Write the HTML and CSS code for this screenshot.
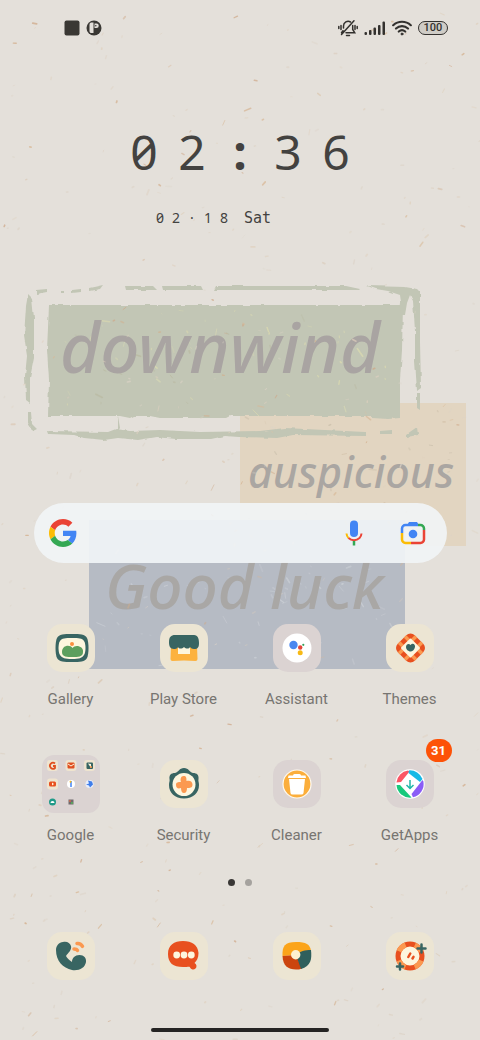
FILE: index.html
```html
<!DOCTYPE html>
<html lang="en">
<head>
    <meta charset="UTF-8">
    <meta name="viewport" content="width=device-width, initial-scale=1.0">
    <title>Home screen</title>
    <link rel="stylesheet" href="styles.css">
</head>
<body>
    <div class="screen">
        <!-- Wallpaper -->
        <svg class="wallpaper" viewBox="0 0 480 1040" preserveAspectRatio="xMidYMin slice">
            <defs>
                <filter id="rough" x="-5%" y="-5%" width="110%" height="110%">
                    <feTurbulence type="fractalNoise" baseFrequency="0.1" numOctaves="2" seed="4" result="n"/>
                    <feDisplacementMap in="SourceGraphic" in2="n" scale="3" xChannelSelector="R" yChannelSelector="G"/>
                </filter>
            </defs>
            <rect x="240" y="403" width="226" height="143" fill="#e2d5c1"/>
            <rect x="89" y="520" width="316" height="149" fill="#b6bbc4"/>
            <g filter="url(#rough)" fill="#c2c6b5">
                <path d="M49 305H403L402 350 400 380 400 418 388 419 372 418V416H230L226 418H160L150 416H134L130 418 120 416H48L49 380 47 350z"/>
                <path d="M28 294l4 4 2 20v40l-4 20v25l-4-3-1-24 2-20-3-20 2-30zM28 412h3l1 12 5 5-4 2-5-8z"/>
                <path d="M36 290l11-1v3l-11 2zM61 291h3v2h-3zM72 290l9-1v3l-9 1zM89 288l14-3-3 4-11 2z"/>
                <path d="M125 286h28l4 4h-31zM162 286h39l2 4h-40zM216 286h130l14 3-1 1-145 0z"/>
                <path d="M367 286l38 1 12 2 3 3v50l1 46-4 3-2-30v-30l-2-30-3-6-3 8-2 12-5 0 1-13-1-7-12-4-12-2z"/>
                <path d="M417 393h3v17l-3-2zM118 416l2 12-2 3zM380 431l12-1v4h-12zM407 434l10-7 1 8-11 2z"/>
                <path d="M48 431l60 1 8-3 14 2 30-1 40 2 60-1 25-3 80 4v4l-72-1-16 3-38-1-14-1-14 3h-35l-20-2-18 3-20-2-14 2-20-2-10-3-25-1z"/>
            </g>
            <g id="scratches" fill="none" stroke-linecap="round"></g>
            <g class="wallpaper-text">
                <text x="60" y="373" font-size="69" fill="#a9a4a2">downwind</text>
                <text x="248" y="488" font-size="43" fill="#aaa6a2">auspicious</text>
                <text x="105" y="609" font-size="62" fill="#a9a7a5">Good luck</text>
            </g>
            <g id="specks" fill="none" stroke-linecap="round"></g>
        </svg>

        <header class="status-bar">
            <div class="status-left">
                <svg width="16" height="16" viewBox="0 0 16 16"><rect width="15" height="15" x=".5" y=".5" rx="2" fill="#3a3834"/></svg>
                <svg width="16" height="16" viewBox="0 0 16 16"><circle cx="8" cy="8" r="7.500" fill="#3a3834"/><path d="M5 2.500h2.500v10.500H6a2 2 0 0 1-2.500-2V4.500a2 2 0 0 1 1.500-2zM8.500 3.500h2a2.200 2.200 0 0 1 0 4.500h-2z" fill="#e4e0da"/><circle cx="9.800" cy="5.700" r=".8" fill="#3a3834"/></svg>
            </div>
            <div class="status-right">
                <svg width="20" height="18" viewBox="0 0 20 18" fill="none" stroke="#33312e" stroke-width="1.500" stroke-linecap="round"><path d="M5.500 9V7a4.600 4.600 0 0 1 7-4M14.700 6.500v4l2 3.200H8M3.500 13.700l1.500-2M8.500 16.500h3M3.500 15.500L16 1.800M3 6.500v4M.8 7.500v2M17 6.500v4M19.200 7.500v2"/></svg>
                <svg width="22" height="16" viewBox="0 0 22 16" fill="#33312e"><rect x=".5" y="12" width="2.500" height="3" rx="1"/><rect x="5" y="10" width="2.500" height="5" rx="1"/><rect x="9.500" y="7.500" width="2.500" height="7.500" rx="1"/><rect x="14" y="5" width="2.500" height="10" rx="1"/><rect x="18.500" y="1.500" width="2.500" height="13.500" rx="1"/></svg>
                <svg width="20" height="16" viewBox="0 0 20 16" fill="none" stroke="#33312e" stroke-width="2.200" stroke-linecap="round"><path d="M1.200 5.200a13 13 0 0 1 17.600 0M4 8.500a9 9 0 0 1 12 0M6.800 11.500a5 5 0 0 1 6.400 0"/><circle cx="10" cy="14" r="1" fill="#33312e" stroke-width="1"/></svg>
                <span class="battery">100</span>
            </div>
        </header>

        <section class="clock">
            <div class="time"><span>0</span><span>2</span><span class="colon">:</span><span>3</span><span>6</span></div>
            <div class="date">
                <div class="day"><span>0</span><span>2</span><span>·</span><span>1</span><span>8</span></div>
                <span class="weekday">Sat</span>
            </div>
        </section>

        <form class="search">
            <svg width="28" height="28" viewBox="0 0 48 48"><path fill="#ea4335" d="M24 9.500c3.540 0 6.710 1.220 9.210 3.600l6.850-6.850C35.900 2.380 30.470 0 24 0 14.620 0 6.510 5.380 2.560 13.220l7.980 6.190C12.430 13.720 17.740 9.500 24 9.500z"/><path fill="#4285f4" d="M46.980 24.550c0-1.570-.15-3.090-.38-4.550H24v9.020h12.940c-.58 2.960-2.260 5.480-4.780 7.180l7.730 6c4.510-4.180 7.090-10.360 7.090-17.650z"/><path fill="#fbbc05" d="M10.530 28.590c-.48-1.450-.76-2.990-.76-4.590s.27-3.140.76-4.590l-7.980-6.190C.92 16.460 0 20.120 0 24c0 3.880.92 7.540 2.560 10.780z"/><path fill="#34a853" d="M24 48c6.480 0 11.930-2.130 15.890-5.810l-7.730-6c-2.150 1.450-4.920 2.300-8.160 2.300-6.260 0-11.570-4.220-13.470-9.910l-7.980 6.190C6.510 42.620 14.620 48 24 48z"/></svg>
            <input type="search" aria-label="Search">
            <button type="button" aria-label="Voice search">
                <svg width="28" height="28" viewBox="0 0 28 28" fill="none" stroke-width="2"><rect x="10" y="1.500" width="8" height="16.500" rx="4" fill="#4285f4"/><path stroke="#fbbc05" d="M6.500 14.500a7 7 0 0 0 2 4.500"/><path stroke="#ea4335" d="M8.500 19a8 8 0 0 0 11 0 7 7 0 0 0 2-4.500"/><path stroke="#34a853" stroke-width="2.500" d="M14 22v4.500"/></svg>
            </button>
            <button type="button" aria-label="Search by image">
                <svg width="28" height="28" viewBox="0 0 28 28" fill="none" stroke-width="2.500"><path fill="#4285f4" d="M8.500 5.500L10 3h8l1.500 2.500z"/><path stroke="#4285f4" d="M3 14V9.500A3.500 3.500 0 0 1 6.500 6H19"/><path stroke="#34a853" d="M19 6h2.500A3.500 3.500 0 0 1 25 9.500V11"/><path stroke="#ea4335" d="M25 11v9.500a3.500 3.500 0 0 1-3.500 3.500H12"/><path stroke="#fbbc05" d="M12 24H6.500A3.500 3.500 0 0 1 3 20.500V14"/><circle cx="14" cy="15" r="4.300" fill="#4285f4"/></svg>
            </button>
        </form>

        <main class="apps">
            <button class="app">
                <span class="slot"><span class="tile">
                    <svg viewBox="0 0 48 48"><path d="M25 10c8 0 13 0 15 4s2 16 0 20-7 4-15 4-13 0-15-4-2-16 0-20 7-4 15-4z" fill="#386562"/><path d="M25 14c7 0 10 0 12 3s2 11 0 14-5 4-12 4-10-1-12-4-2-11 0-14 5-3 12-3z" fill="#fdf6de"/><path d="M15 28c0-7 8-8 10.500-4C28 20 37 22 36 28c0 5-5 5-10.500 5S15 33 15 28z" fill="#5c9f5e"/><circle cx="25" cy="20" r="2" fill="#f98f3f"/></svg>
                </span></span>
                <span class="label">Gallery</span>
            </button>
            <button class="app">
                <span class="slot"><span class="tile">
                    <svg viewBox="0 0 48 48"><path d="M11 22h26l.5 13q0 2-2 2-11.500-1-23 0-2 0-2-2z" fill="#fcb23f"/><path d="M18 20h12v10H18z" fill="#fdf6de"/><path d="M15 11h19c4 0 5 4 5 8s-1 6-5 6c-2 0-3-1-4-2-1 2-4 2-6 0-2 2-5 2-6 0-1 2-3 2-4 2-4 0-5-3-5-7 0-5 2-7 6-7z" fill="#386562"/></svg>
                </span></span>
                <span class="label">Play Store</span>
            </button>
            <button class="app">
                <span class="slot"><span class="tile tile-mauve">
                    <svg viewBox="0 0 48 48"><circle cx="24" cy="24" r="14.500" fill="#fff"/><circle cx="20.500" cy="21" r="4.200" fill="#4a87f0"/><circle cx="27.200" cy="23.500" r="2.200" fill="#e3453a"/><circle cx="30.300" cy="20.800" r="1.100" fill="#34a35a"/><circle cx="27.200" cy="28.700" r="2.500" fill="#f7b914"/></svg>
                </span></span>
                <span class="label">Assistant</span>
            </button>
            <button class="app">
                <span class="slot"><span class="tile">
                    <svg viewBox="0 0 48 48"><g transform="rotate(45 24.500 24)" fill="none" stroke-width="5"><rect x="12.500" y="12" width="24" height="24" rx="6" fill="#e8501f"/><path d="M18.500 14.500h3.500M27 14.500h3.500M34 18v3.500M34 26.500v3.500M30.500 33.500H27M22 33.500H18.500M15 30V26.500M15 21.500V18" stroke="#fb9950"/><rect x="17.500" y="17" width="14" height="14" rx="1" fill="#fdf6de"/></g><path d="M24.500 21c2-2.500 5-1 4.500 2s-3 4.500-4.500 4.500S20 26 20 23s3-4 4.500-2z" fill="#386562"/></svg>
                </span></span>
                <span class="label">Themes</span>
            </button>
            <button class="app">
                <span class="slot"><span class="folder">
                    <svg viewBox="0 0 58 58">
                        <g fill="#efe4cf"><rect x="5" y="5" width="11" height="11" rx="3"/><rect x="23.500" y="5" width="11" height="11" rx="3"/><rect x="42" y="5" width="11" height="11" rx="3"/><rect x="5" y="23.500" width="11" height="11" rx="3"/></g>
                        <path d="M13 8.500a3 3 0 1 0 0 4.500v-2h-2" fill="none" stroke="#e0501f" stroke-width="1.800"/>
                        <rect x="25.500" y="7.500" width="7" height="6" rx="1" fill="#e0501f"/><path d="M26 9l3 2 3-2" fill="none" stroke="#fdf6de" stroke-width="1"/>
                        <rect x="44.500" y="7.500" width="6.500" height="6.500" rx="1" fill="#386562"/><path d="M46 8.500l3 4.500V9z" fill="#fdf6de"/><circle cx="49" cy="12" r="1" fill="#fb9950"/>
                        <rect x="7" y="26.500" width="7" height="5" rx="1.500" fill="#e8501f"/><path d="M10 27.500l2 1.500-2 1.500z" fill="#fdf6de"/>
                        <circle cx="29" cy="29" r="4" fill="#fff"/><path d="M29 26v6" stroke="#4285f4" stroke-width="1.500"/><path d="M28 27.500l1-1.500" stroke="#f7b914" stroke-width="1.500"/>
                        <circle cx="47.500" cy="29" r="4" fill="#e8eefb"/><path d="M46 25.500l4 1 1 3-3 3-1-2-3-1 3-1z" fill="#3f7dea"/>
                        <circle cx="10.500" cy="47" r="3.500" fill="#1e9a88"/><path d="M8.500 48a2 2 0 0 1 4 0z" fill="#fff"/>
                        <rect x="26.500" y="44.500" width="5" height="5" fill="#706a6c"/><path d="M27 45h2v2h-2z" fill="#b86a54"/><path d="M29 47h2v2h-2z" fill="#5da05e"/>
                    </svg>
                </span></span>
                <span class="label">Google</span>
            </button>
            <button class="app">
                <span class="slot"><span class="tile">
                    <svg viewBox="0 0 48 48"><path d="M24 8c5 0 5 4 9 5 4 0 6 2 5.500 6-.5 2 .5 3 .5 6 0 8-6 13.500-15 13.500S9 33 9 25c0-3 1-4 .5-6-.5-4 1.500-6 5.500-6 4-1 4-5 9-5z" fill="#386562"/><circle cx="24" cy="24.500" r="11.500" fill="#fdf6de"/><path d="M23.500 16c3 0 3 2 3 5 3-1 6 0 6 3.500S30 28 27 28c0 3-1 5-3 5s-3-2-3-5c-3 1-5 0-5-3s2-3 5-3c-1-3 0-6 2.500-6z" fill="#fb9950"/></svg>
                </span></span>
                <span class="label">Security</span>
            </button>
            <button class="app">
                <span class="slot"><span class="tile tile-mauve">
                    <svg viewBox="0 0 48 48"><circle cx="24" cy="24" r="14" fill="#fbae3c" stroke="#fffaf0" stroke-width="1.200"/><path d="M20 15.500q0-1.500 1.500-1.500h5q1.500 0 1.500 1.500h4.500l.5 2.500H15l.5-2.500zM16 19h16l-1.500 14q-.2 1.500-2 1.500h-9q-1.800 0-2-1.500z" fill="#fff"/></svg>
                </span></span>
                <span class="label">Cleaner</span>
            </button>
            <button class="app">
                <span class="slot"><span class="tile tile-mauve">
                    <svg viewBox="0 0 48 48"><circle cx="24" cy="24" r="14.700" fill="#fff"/><path d="M22 10.500A13.600 13.600 0 0 0 10.400 22.500L15 22l8.500-10.500z" fill="#fb5565"/><path d="M23 10.400a13.600 13.600 0 0 1 13.500 8.600L34 22l-11.500-9z" fill="#16b9e6"/><path d="M37.400 21.500A13.600 13.600 0 0 1 27 37.300L25.500 34 36.500 20z" fill="#8a5cf6"/><path d="M10.500 25a13.600 13.600 0 0 0 15 12.600L14 25z" fill="#18c97c"/><path d="M24 20v8M20.500 25l3.500 3.500 3.500-3.500" fill="none" stroke="#20b8a8" stroke-width="1.500"/></svg>
                    <span class="badge">31</span>
                </span></span>
                <span class="label">GetApps</span>
            </button>
        </main>

        <div class="pages"><i class="active"></i><i></i></div>

        <nav class="dock">
            <button class="slot" aria-label="Phone"><span class="tile">
                <svg viewBox="0 0 48 48"><path d="M16 10c4-1 7 1 8 4 1 4-3 7-5 10 1 2 3 4 6 6 0-4 3-7 7.500-7s7 3 6.500 7c-1 6-7 9-14 8C16 36 9 29 9 18c0-4 3-8 7-8z" fill="#386562"/><path d="M30 11.500c3-.5 4.500 1 5.500 2.800M27 17c2 0 3 .5 3.500 1.500" fill="none" stroke="#fb9950" stroke-width="3.500" stroke-linecap="round"/></svg>
            </span></button>
            <button class="slot" aria-label="Messages"><span class="tile">
                <svg viewBox="0 0 48 48"><path d="M23 9c9 0 15 4 15.500 12 0 5-2 8-4 10a3.400 3.400 0 1 1-4.500 4.500C30 34 28 35 23 35 13 35 8 31 8 22S14 9 23 9z" fill="#e8501f"/><g fill="#fdf6de"><circle cx="16.700" cy="23" r="3.400"/><circle cx="24" cy="23" r="3.400"/><circle cx="31.300" cy="23" r="3.400"/></g></svg>
            </span></button>
            <button class="slot" aria-label="Browser"><span class="tile">
                <svg viewBox="0 0 48 48"><path d="M9.500 24C9 14 12 10 23 10c10 0 14 2 15 9l-15 4z" fill="#fba41a"/><path d="M9.500 24C10 34 15 37.500 23 37.500c2 0 4 0 6-1L23 23z" fill="#cb450e"/><path d="M38 18c1 9 0 16-10 19l-5-14c4-4 9-5 15-5z" fill="#2f5f5c"/><circle cx="22.700" cy="22.700" r="4.700" fill="#fdf0d0"/></svg>
            </span></button>
            <button class="slot" aria-label="Camera"><span class="tile">
                <svg viewBox="0 0 48 48"><circle cx="24" cy="24" r="12" fill="#fdf6de" stroke="#e8501f" stroke-width="5"/><circle cx="24" cy="24" r="12" fill="none" stroke="#fb9950" stroke-width="5" stroke-dasharray="9.400 9.450" transform="rotate(22 24 24)"/><path d="M22.300 25l2-3.500M26.500 26.500l1-1.700" stroke="#e8501f" stroke-width="2.500" stroke-linecap="round"/><path d="M35.500 12.500v8M31.500 16.500h8M14 31.500v6M11 34.500h6" stroke="#386562" stroke-width="2.500" stroke-linecap="round"/></svg>
            </span></button>
        </nav>

        <div class="home-bar"></div>
    </div>
    <script src="wallpaper.js"></script>
</body>
</html>
```
FILE: styles.css
```css
* { box-sizing: border-box; }
body { margin: 0; background: #e4e0da; font-family: Roboto, Arial, sans-serif; }
button { padding: 0; border: none; background: none; font: inherit; color: inherit; cursor: pointer; }
svg { display: block; }

.screen { position: relative; display: flex; flex-direction: column; min-height: 100vh; padding-bottom: 8px; overflow: hidden; }
.screen > * { position: relative; }
.screen > .wallpaper { position: absolute; inset: 0; width: 100%; height: 100%; }
.wallpaper-text { font-family: "Noto Sans", sans-serif; font-weight: 500; font-style: italic; }

/* Status bar */
.status-bar { display: flex; justify-content: space-between; align-items: center; height: 56px; padding: 0 32px 0 64px; }
.status-left, .status-right { display: flex; align-items: center; gap: 6px; }
.battery { width: 30px; height: 14px; border: 1px solid #33312e; border-radius: 7px; background: #cfccc6; color: #33312e; font-size: 11px; font-weight: 500; line-height: 12px; text-align: center; }

/* Clock */
.clock { width: 240px; margin: 68px auto 0; color: #434240; font-family: "Noto Sans", sans-serif; font-variant-numeric: slashed-zero; }
.time { display: grid; grid-template-columns: repeat(5, 1fr); font-size: 48px; line-height: 56px; text-align: center; }
.colon { font-weight: 700; }
.date { display: flex; gap: 12px; margin-top: 28px; padding-left: 32px; line-height: 20px; }
.day { display: grid; grid-template-columns: repeat(5, 16px); font-size: 14px; text-align: center; }
.weekday { font-family: "DejaVu Sans Mono", monospace; font-size: 15px; }

/* Search */
.search { display: flex; align-items: center; gap: 31px; height: 60px; margin: 275px 33px 0 34px; padding: 0 20px 0 15px; border-radius: 30px; background: rgba(241, 244, 246, .92); }
.search input { flex: 1; min-width: 0; height: 40px; border: none; outline: none; background: none; font-size: 16px; }

/* Apps */
.apps, .dock { display: grid; grid-template-columns: repeat(4, 1fr); padding: 0 14px; }
.apps { row-gap: 45px; margin-top: 55px; }
.app { display: flex; flex-direction: column; align-items: center; gap: 11px; }
.slot { display: flex; align-items: center; justify-content: center; height: 60px; }
.tile { position: relative; width: 48px; height: 48px; border-radius: 15px; background: #ece5d3; }
.tile-mauve { background: #dbd3d2; }
.folder { width: 58px; height: 58px; border-radius: 12px; background: #dbd3d2; }
.label { color: #777571; font-size: 15px; line-height: 20px; }
.badge { position: absolute; top: -21px; right: -18px; width: 26px; height: 23px; border-radius: 12px; background: #fd5207; color: #fff; font-size: 13px; font-weight: 700; line-height: 23px; text-align: center; }

.pages { display: flex; justify-content: center; gap: 10px; margin-top: 34px; }
.pages i { width: 7px; height: 7px; border-radius: 50%; background: #a5a29e; }
.pages .active { background: #393735; }
.dock { margin-top: 40px; }
.home-bar { width: 37%; height: 4px; margin: 42px auto 0; border-radius: 2px; background: #252423; }
```
FILE: wallpaper.js
```js
// Paper grain: same seed every time so the wallpaper doesn't change on reload
let seed = 218;
function rnd() {
    seed = (seed * 16807) % 2147483647;
    return seed / 2147483647;
}

function scatter(id, count, box, colors, maxLength, angle) {
    const group = document.getElementById(id);
    for (let i = 0; i < count; i++) {
        const x = box[0] + rnd() * box[2];
        const y = box[1] + rnd() * box[3];
        const len = 1 + rnd() * rnd() * maxLength;
        const a = angle + rnd() * 2;
        const line = document.createElementNS('http://www.w3.org/2000/svg', 'path');
        line.setAttribute('d', `M${x} ${y}l${Math.cos(a) * len} ${Math.sin(a) * len}`);
        line.setAttribute('stroke', colors[Math.floor(rnd() * colors.length)]);
        line.setAttribute('stroke-width', 0.8 + rnd());
        line.setAttribute('opacity', 0.3 + rnd() * 0.5);
        group.appendChild(line);
    }
}

scatter('specks', 260, [0, 0, 480, 1040], ['#dcd3c7', '#dccfc0', '#dfd0be'], 5, -1.5);
scatter('specks', 120, [0, 0, 480, 1040], ['#d3ae8b', '#cfa98a', '#d8b896'], 6, -1.3);
scatter('scratches', 60, [52, 310, 344, 100], ['#dad9b0', '#d5d6b4', '#b9b8a0'], 10, 0);
scatter('scratches', 60, [92, 562, 308, 104], ['#ccd0d6', '#c6cad1'], 10, -0.5);
scatter('scratches', 30, [244, 410, 218, 130], ['#c9bda9', '#d3c2aa'], 7, -0.5);
```
